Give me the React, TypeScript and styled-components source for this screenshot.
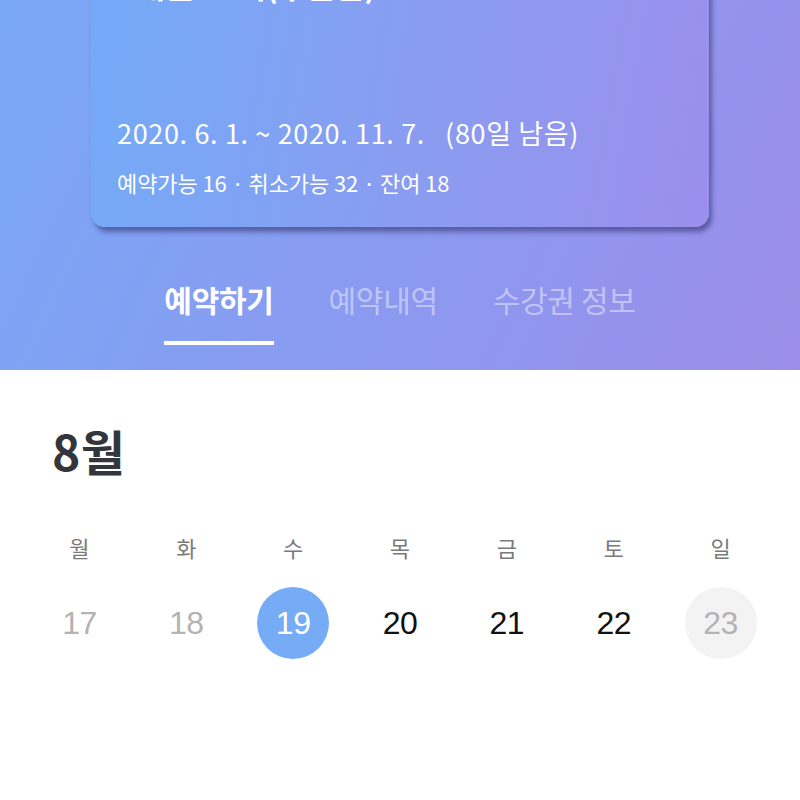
import React from "react";
import styled, { createGlobalStyle } from "styled-components";

const GlobalStyle = createGlobalStyle`
  html, body {
    margin: 0;
    padding: 0;
    background: #fff;
    overflow: hidden;
  }
  body {
    font-family: "Noto Sans CJK KR", "Noto Sans", sans-serif;
  }
`;

const Page = styled.div`
  display: flex;
  flex-direction: column;
  width: 800px;
  margin-top: -54px;
`;

const Header = styled.div`
  display: flex;
  flex-direction: column;
  align-items: center;
  background: linear-gradient(115deg, #78a8f6 0%, #8b9af0 55%, #9c8de9 100%);
  height: 424px;
  box-sizing: border-box;
`;

const Card = styled.div`
  width: 618px;
  height: 281px;
  box-sizing: border-box;
  padding: 18px 26px 0;
  border-radius: 0 0 14px 14px;
  background: linear-gradient(100deg, #73abf8 0%, #8a9cf0 55%, #9b8fec 100%);
  box-shadow: 3px 5px 5px rgba(55, 55, 120, 0.6);
  color: #fff;
  display: flex;
  flex-direction: column;
`;

const Title = styled.div`
  font-size: 32px;
  font-weight: 700;
  line-height: 40px;
  letter-spacing: -0.5px;
`;

const Period = styled.div`
  margin-top: 112px;
  font-size: 27px;
  line-height: 34px;
  font-weight: 400;
  letter-spacing: 0.65px;
  white-space: pre;
`;

const Counts = styled.div`
  margin-top: 17px;
  font-size: 22px;
  line-height: 30px;
  letter-spacing: -0.1px;
`;

const Tabs = styled.div`
  display: flex;
  gap: 55px;
  margin-top: 52px;
`;

const Tab = styled.div<{ $active?: boolean }>`
  display: flex;
  flex-direction: column;
  align-items: center;
  font-size: 30px;
  line-height: 40px;
  font-weight: ${(p) => (p.$active ? 700 : 400)};
  color: ${(p) => (p.$active ? "#fff" : "rgba(255,255,255,0.45)")};
  letter-spacing: -0.3px;

  &::after {
    content: "";
    align-self: stretch;
    margin-top: 22px;
    height: 4px;
    background: ${(p) => (p.$active ? "#fff" : "transparent")};
  }
`;

const Body = styled.div`
  padding: 50px 26px 0;
`;

const Month = styled.div`
  padding-left: 26px;
  font-size: 48px;
  font-weight: 700;
  line-height: 60px;
  color: #33363c;
  letter-spacing: 0.5px;
`;

const Week = styled.div`
  display: grid;
  grid-template-columns: repeat(7, 1fr);
  margin-top: 52px;
`;

const DayName = styled.div`
  text-align: center;
  font-size: 22px;
  line-height: 30px;
  color: #7a7a7a;
`;

const DateCell = styled.div`
  display: flex;
  justify-content: center;
  margin-top: 25px;
`;

const DateCircle = styled.div<{ $kind: "past" | "today" | "normal" | "holiday" }>`
  width: 72px;
  height: 72px;
  border-radius: 50%;
  display: flex;
  align-items: center;
  justify-content: center;
  font-family: "Liberation Sans", "Noto Sans", sans-serif;
  font-size: 32px;
  letter-spacing: -0.5px;
  background: ${(p) =>
    p.$kind === "today" ? "#76acf6" : p.$kind === "holiday" ? "#f3f3f3" : "transparent"};
  color: ${(p) =>
    p.$kind === "today"
      ? "#fff"
      : p.$kind === "normal"
      ? "#111"
      : "#b3b3b3"};
`;

const days = [
  { name: "월", date: 17, kind: "past" as const },
  { name: "화", date: 18, kind: "past" as const },
  { name: "수", date: 19, kind: "today" as const },
  { name: "목", date: 20, kind: "normal" as const },
  { name: "금", date: 21, kind: "normal" as const },
  { name: "토", date: 22, kind: "normal" as const },
  { name: "일", date: 23, kind: "holiday" as const },
];

const App = () => {
  return (
    <Page>
      <GlobalStyle />
      <Header>
        <Card>
          <Title>6개월 40회(주말반)</Title>
          <Period>{"2020. 6. 1. ~ 2020. 11. 7.   (80일 남음)"}</Period>
          <Counts>예약가능 16 · 취소가능 32 · 잔여 18</Counts>
        </Card>
        <Tabs>
          <Tab $active>예약하기</Tab>
          <Tab>예약내역</Tab>
          <Tab>수강권 정보</Tab>
        </Tabs>
      </Header>
      <Body>
        <Month>8월</Month>
        <Week>
          {days.map((d) => (
            <DayName key={d.name}>{d.name}</DayName>
          ))}
          {days.map((d) => (
            <DateCell key={d.date}>
              <DateCircle $kind={d.kind}>{d.date}</DateCircle>
            </DateCell>
          ))}
        </Week>
      </Body>
    </Page>
  );
};

export default App;
